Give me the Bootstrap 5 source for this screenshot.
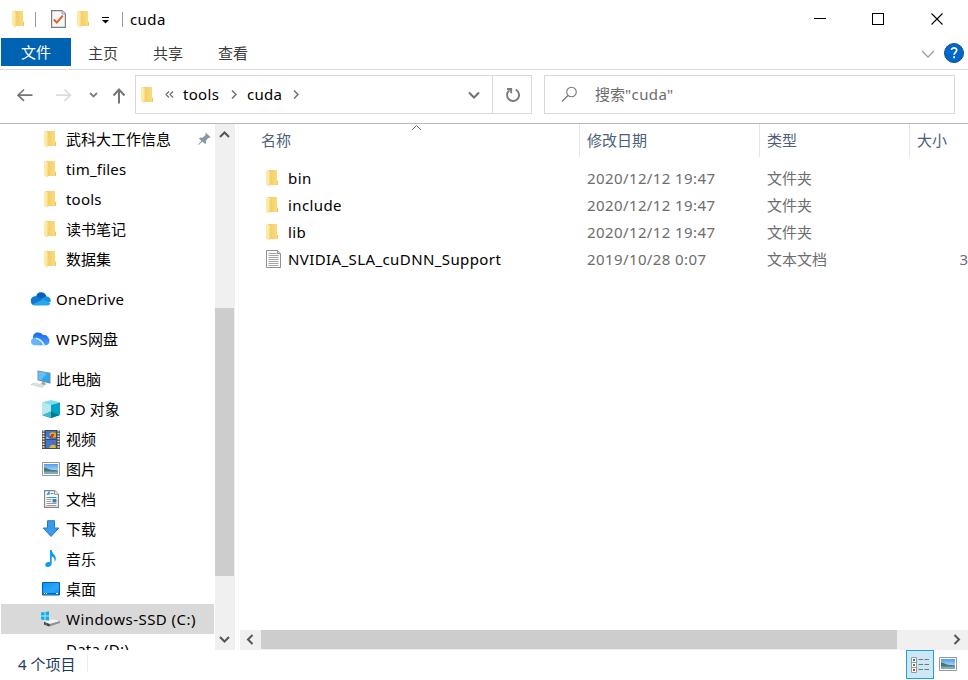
<!DOCTYPE html>
<html lang="zh-CN">
<head>
<meta charset="utf-8">
<meta name="viewport" content="width=device-width, initial-scale=1">
<title>cuda</title>
<link href="https://cdn.jsdelivr.net/npm/bootstrap@5.3.0/dist/css/bootstrap.min.css" rel="stylesheet">
<style>
body{font-family:"Noto Sans","Noto Sans CJK SC",sans-serif;font-size:15px;line-height:20px;color:#000;background:#fff}
svg{display:block;flex:none}
.win{width:968px;height:680px}
.titlebar{height:38px;padding-left:12px}
.sep{width:1px;height:15px;background:#9a9a9a}
.sep-a{margin:0 15px 0 10px}
.sep-b{margin:0 7px 0 13px}
.qat-folder{margin:0 12px 0 11px}
.tabs{height:32px;border-bottom:1px solid #dadbdc;padding-left:1px;color:#3b3b3b}
.file-tab{width:70px;height:28px;background:#0063b1;color:#fff}
.tab{width:65px;height:30px;padding-right:1px}
.ribbon-toggle{margin:8px 9px 0 0}
.help{margin:1px 4px 0 0}
.addr-row{height:54px;border-bottom:1px solid #b9b9b9;padding:5px 13px 0 0}
.addr{width:397px;height:39px;border:1px solid #d9d9d9}
.crumbs{padding-left:5px}
.crumb{height:22px;width:48px;margin-left:9px;white-space:nowrap;letter-spacing:.3px}
.crumb+svg+.crumb{width:46px;margin-left:10px}
.more{margin-left:11px}
.drop{margin-right:12px}
.refresh{width:39px;border-left:1px solid #d9d9d9;padding-left:1px}
.search{width:411px;height:39px;border:1px solid #d9d9d9;margin-left:12px;color:#6d6d6d}
.search svg{margin:0 17px 1px 16px}
.search-text{padding-bottom:2px}
.body-row{height:526px}
.side{width:215px;padding-left:1px}
.item{height:30px;flex:none;padding-left:40px}
.item.top{padding-left:29px;margin-top:10px}
.item .ico{width:20px;margin-right:5px}
.item .ico.fold{padding-left:3px}
.item.top .ico{width:21px}
.item.sel{background:#d9d9d9;width:213px}
.item .la{letter-spacing:.2px}
.item.sel .la{letter-spacing:.45px}
.pin{margin-left:27px}
.vbar{width:20px;background:#f0f0f0}
.thumb-v{width:19px;height:268px;background:#cdcdcd;margin-top:164px}
.arrow-v{height:20px}
.main-pane{width:730px;border-left:1px solid #f5f5f5;margin-left:3px}
.grid-head{height:33px;color:#4c607a;margin-bottom:8px}
.grid-head>div{padding-bottom:1px}
.c-name{width:340px;padding-left:22px;flex:none}
.c-date{width:180px;padding-left:8px;flex:none}
.c-type{width:150px;padding-left:8px;flex:none}
.c-size{width:60px;padding-left:8px;flex:none}
.grid-head .c-date,.grid-head .c-type,.grid-head .c-size{border-left:1px solid #e5e5e5;padding-left:7px}
.filerow{height:27px;color:#6d6d6d;padding-bottom:1px}
.filerow .c-name{color:#000;padding-left:27px}
.filerow .c-name svg{margin-right:7px;margin-bottom:1px}
.hbar{height:20px;background:#f0f0f0;margin-left:1px}
.thumb-h{width:636px;height:19px;background:#cdcdcd}
.sort{left:172px;top:0}
.status{height:30px;color:#1e395b;padding-left:18px}
.count{margin-top:4px}
.status-sep{width:1px;height:17px;background:#ececec;margin:5px 0 0 12px}
.view-on{width:28px;height:29px;background:#cce8f6;border:1px solid #26a0da}
.view-large{margin:7px 11px 0 5px}
.la{white-space:nowrap;letter-spacing:.4px}
</style>
<script src="https://cdn.jsdelivr.net/npm/bootstrap@5.3.0/dist/js/bootstrap.bundle.min.js"></script>
</head>
<body>
<svg width="0" height="0" class="position-absolute">
<defs>
<linearGradient id="gf" x1="0" x2="1"><stop offset="0" stop-color="#f0cc69"/><stop offset="1" stop-color="#fbdc7c"/></linearGradient>
<linearGradient id="gd" x1="0" y1="0" x2="1" y2="1"><stop offset="0" stop-color="#0a93f2"/><stop offset=".6" stop-color="#2aa7fa"/><stop offset="1" stop-color="#0c8eea"/></linearGradient>
<linearGradient id="gw" x1="0" x2="0" y1="0" y2="1"><stop offset="0" stop-color="#1467ef"/><stop offset="1" stop-color="#4ba4ff"/></linearGradient>
<linearGradient id="gs" x1="0" x2="0" y1="0" y2="1"><stop offset="0" stop-color="#4d9cf0"/><stop offset="1" stop-color="#e4f3fb"/></linearGradient>
</defs>
<symbol id="folder" viewBox="0 0 13 18"><path d="M2 1h9v10.500h1V16H3z" fill="url(#gf)"/><path d="M11 12h1v4h-1z" fill="#edc55f"/><path d="M0 1l4 1.500V16l-1.200 1.500L0 15.500z" fill="#fee9a6"/><path d="M3.200 4L4 2.500V16l-1.200 1.500z" fill="#fbdc85"/></symbol>
<symbol id="textdoc" viewBox="0 0 15 18"><path d="M.5.5h11l3 3v14H.5z" fill="#fbfbfb" stroke="#8f8f8f"/><path d="M11.500.5v3h3" fill="#ddd" stroke="#8f8f8f"/><path d="M2.500 3.500h8M2.500 5.500h10M2.500 7.500h10M2.500 9.500h10M2.500 11.500h10M2.500 13.500h10M2.500 15.500h10" stroke="#a4a4a4"/></symbol>
<symbol id="picture" viewBox="0 0 18 14"><path d="M.5.5h17v13H.5z" fill="#fff" stroke="#999"/><path d="M2 2h14v10H2z" fill="url(#gs)"/><path d="M2 5.500c3 0 4 1.800 7 2.200s5 .3 7 .8V10H2z" fill="#457a68"/><path d="M2 9.500h14V12H2z" fill="#7fa9c4"/></symbol>
</svg>

<div class="win d-flex flex-column overflow-hidden">
  <header class="titlebar d-flex align-items-center">
    <svg width="13" height="18"><use href="#folder"/></svg>
    <span class="sep sep-a"></span>
    <svg width="15" height="18" viewBox="0 0 15 18"><path d="M.6.6h10.500l3.300 3.200v13.600H.6z" fill="#f7f7f9" stroke="#7d7d7d" stroke-width="1.200"/><path d="M11 .6v3.300h3.400" fill="#e8e8e8" stroke="#999"/><path d="M2.800 9.500l3 3.200 6-7" fill="none" stroke="#e8591c" stroke-width="1.900"/></svg>
    <svg class="qat-folder" width="13" height="18"><use href="#folder"/></svg>
    <svg class="mt-1" width="7" height="8" viewBox="0 0 7 8"><path d="M0 .5h7" stroke="#000"/><path d="M0 3h7L3.500 6.500z"/></svg>
    <span class="sep sep-b"></span>
    <span class="la">cuda</span>
    <svg class="ms-auto" width="154" height="38" viewBox="0 0 154 38" fill="none" stroke="#000" shape-rendering="crispEdges"><path d="M0 18.500h12M58.500 13.500h11v11h-11z"/><path d="M117.500 13.500l11 11m0-11l-11 11" shape-rendering="auto" stroke-width="1.100"/></svg>
  </header>

  <nav class="tabs d-flex">
    <div class="file-tab d-flex align-items-center justify-content-center">文件</div>
    <div class="tab d-flex align-items-center justify-content-center">主页</div>
    <div class="tab d-flex align-items-center justify-content-center">共享</div>
    <div class="tab d-flex align-items-center justify-content-center">查看</div>
    <div class="ms-auto d-flex align-items-start pt-1">
      <svg class="ribbon-toggle" width="14" height="8" viewBox="0 0 14 8"><path d="M1 1l6 6 6-6" fill="none" stroke="#a0a0a0" stroke-width="1.300"/></svg>
      <svg class="help" width="20" height="20" viewBox="0 0 20 20"><circle cx="10" cy="10" r="9.500" fill="#0067cc" stroke="#174f88"/><path d="M7.500 7C7.500 4 12.900 4.200 12.700 7.300c0 2-2.600 2.200-2.600 4.500" fill="none" stroke="#fff" stroke-width="1.700"/><path d="M9.200 13.300H11v2H9.200z" fill="#fff"/></svg>
    </div>
  </nav>

  <section class="addr-row d-flex align-items-start">
    <svg width="135" height="39" viewBox="0 75 135 39" fill="none" stroke-width="2"><path d="M32.500 95.200H18M24 89.500l-6 5.700 6 5.700" stroke="#767676" stroke-width="1.700"/><path d="M56 95.200h14.500M64.500 89.500l6 5.700-6 5.700" stroke="#dcdcdc" stroke-width="1.700"/><path d="M90 93l3.500 3.500L97 93" stroke="#808080" stroke-width="1.800"/><path d="M119 103.500V90M113.500 95.500l5.500-6 5.500 6" stroke="#767676"/></svg>
    <div class="addr d-flex">
      <div class="crumbs d-flex align-items-center flex-grow-1">
        <svg width="13" height="18"><use href="#folder"/></svg>
        <svg class="more" width="9" height="7" viewBox="0 0 9 7"><path d="M4 .5l-3 3 3 3M8 .5l-3 3 3 3" fill="none" stroke="#6b6b6b" stroke-width="1.200"/></svg>
        <span class="crumb">tools</span>
        <svg width="6" height="9" viewBox="0 0 6 9"><path d="M1 .5l4 4-4 4" fill="none" stroke="#707070" stroke-width="1.500"/></svg>
        <span class="crumb">cuda</span>
        <svg width="6" height="9" viewBox="0 0 6 9"><path d="M1 .5l4 4-4 4" fill="none" stroke="#707070" stroke-width="1.500"/></svg>
        <svg class="drop ms-auto" width="12" height="8" viewBox="0 0 12 8"><path d="M1 1.500l5 5 5-5" fill="none" stroke="#707070" stroke-width="2"/></svg>
      </div>
      <div class="refresh d-flex align-items-center justify-content-center"><svg width="16" height="16" viewBox="0 0 16 16"><path d="M10.800 2.700A6 6 0 1 1 4.500 3.200M2 2h4.200v4.300" fill="none" stroke="#7b7b7b" stroke-width="1.900"/></svg></div>
    </div>
    <div class="search d-flex align-items-center">
      <svg width="17" height="17" viewBox="0 0 17 17"><circle cx="10.500" cy="6" r="4.800" fill="none" stroke="#757575" stroke-width="1.100"/><path d="M7 9.500L1 15.500" stroke="#757575" stroke-width="1.300"/></svg>
      <span class="search-text">搜索<span class="la">"cuda"</span></span>
    </div>
  </section>

  <div class="body-row d-flex">
    <aside class="side d-flex flex-column overflow-hidden">
      <div class="item d-flex align-items-center"><div class="ico fold"><svg width="13" height="18"><use href="#folder"/></svg></div>武科大工作信息
        <svg class="pin" width="13" height="14" viewBox="0 0 13 14"><path d="M7.500.5l5 4.500-1.500 1.200-.8-.2-2.300 2.800.3 2.200-1 1-3-2.600L.8 13l-.5-.5 3-3.700L1 6.500l1.200-1 2.200.2L7.500 3z" fill="#8a98a6"/></svg></div>
      <div class="item d-flex align-items-center"><div class="ico fold"><svg width="13" height="18"><use href="#folder"/></svg></div><span class="la">tim_files</span></div>
      <div class="item d-flex align-items-center"><div class="ico fold"><svg width="13" height="18"><use href="#folder"/></svg></div><span class="la">tools</span></div>
      <div class="item d-flex align-items-center"><div class="ico fold"><svg width="13" height="18"><use href="#folder"/></svg></div>读书笔记</div>
      <div class="item d-flex align-items-center"><div class="ico fold"><svg width="13" height="18"><use href="#folder"/></svg></div>数据集</div>
      <div class="item top d-flex align-items-center"><div class="ico"><svg width="21" height="14" viewBox="0 0 21 14"><path d="M6 5C7 1 9 .2 11 .3c3 0 5 2 5.500 4.500L12 8z" fill="#0364b8"/><path d="M1 10C0 6 3 4 6.500 4.300L14 8.500 3.500 13C2 12.800 1.200 11.500 1 10z" fill="#0f78d4"/><path d="M11 6.500l5-2c3 0 5 2 4.800 5L17 11z" fill="#1490df"/><path d="M2.200 12.500L13 7.500l7.500 3.500c-.5 1.800-2 2.500-3.500 2.500H5c-1.200 0-2-.4-2.800-1z" fill="#28a8ea"/></svg></div><span class="la">OneDrive</span></div>
      <div class="item top d-flex align-items-center"><div class="ico"><svg width="21" height="14" viewBox="0 0 21 14"><path d="M3 6C2.500 2 5.500.4 8 .4c2.500 0 4 1 5 2.700 3-.6 4.500.2 5 2.400 2.500 1.500 2 7.800-2.500 7.800H8z" fill="url(#gw)"/><path d="M7 5.500C2 5.500.8 8 1 10c.3 2.300 2 3.300 4 3.300h6L10 8z" fill="#65b4ff"/><path d="M6 6c3 0 6.500 1.500 9 7.300h-2C10.500 9 9 7.300 5.500 7z" fill="#d8edff"/></svg></div><span><span class="la">WPS</span>网盘</span></div>
      <div class="item top d-flex align-items-center"><div class="ico"><svg width="21" height="18" viewBox="0 0 21 18"><path d="M7.500.5l13 2.200v11l-13-3.500z" fill="#7c878e"/><path d="M8.300 1.500l11.500 2v9.100L8.300 9.500z" fill="#30a5f0"/><path d="M8.300 1.500l8.700 1.500-6 7.200-2.700-.7z" fill="#63bffb"/><path d="M12 11.600l3 .8v1.100l2 .5-3 1-4-1 2-.8z" fill="#9ba3a9"/><path d="M4 13l10.500 2.400L12 17.400 1 14.500z" fill="#dde2e5" stroke="#c3c9cd" stroke-width=".6"/></svg></div>此电脑</div>
      <div class="item d-flex align-items-center"><div class="ico"><svg width="20" height="18" viewBox="0 0 20 18"><path d="M1 2.500L10 0l9 2.500L10 6z" fill="#7cdfe9"/><path d="M1 2.500L10 5v13l-9-3z" fill="#b6e9eb"/><path d="M19 2.500L10 5v13l9-3z" fill="#00a3c4"/><path d="M10 11.500l8.500 3.700L10 18l-8.500-2.700z" fill="#08798a"/><path d="M10 11.500V18l-8.500-2.700z" fill="#40bdc8"/></svg></div><span><span class="la">3D</span> 对象</span></div>
      <div class="item d-flex align-items-center"><div class="ico"><svg width="19" height="19" viewBox="0 0 19 19"><path d="M1 0h18v19H1z" fill="#4a4a4a"/><path d="M2.500 0v19M17.500 0v19" stroke="#e7e7e7" stroke-width="2" stroke-dasharray="1.500 1.200"/><path d="M5 1h10v8H5zM5 10h10v8H5z" fill="#3c78d8"/><path d="M8 4l3-2 4 1v4l-4 1z" fill="#d4b226"/><path d="M10 4h3v2h-3zM9 6h3v2H9z" fill="#cf3b26"/><path d="M8 18l2-3h4l1 3z" fill="#e5ba26"/><path d="M10 12l3-1-1 3z" fill="#d44030"/><path d="M5 6l4 3H5z" fill="#80b5ef"/></svg></div>视频</div>
      <div class="item d-flex align-items-center"><div class="ico"><svg width="19" height="14" viewBox="-1 0 19 14"><use href="#picture" width="18" height="14"/></svg></div>图片</div>
      <div class="item d-flex align-items-center"><div class="ico"><svg width="18" height="18" viewBox="-3 0 18 18"><path d="M.6.600h10l3.800 3.800v13H.6z" fill="#fff" stroke="#858585" stroke-width="1.200"/><path d="M10.500.6v3.800h4" fill="#eee" stroke="#999"/><path d="M3 5l2-3v3M6.500 3.500h3M2.500 7.500h10" fill="none" stroke="#2397d7" stroke-width="1.200"/><path d="M2.500 9.500h5m-5 2h5m-5 2h10m-10 2h10" stroke="#999"/><path d="M8.500 9h4v3.500h-4z" fill="#347fbd"/></svg></div>文档</div>
      <div class="item d-flex align-items-center"><div class="ico"><svg width="19" height="18" viewBox="0 0 19 18"><path d="M6.500.7h7V8h4.300L10 16.500 2.200 8h4.300z" fill="#399bea" stroke="#257bc3"/></svg></div>下载</div>
      <div class="item d-flex align-items-center"><div class="ico"><svg width="19" height="18" viewBox="0 0 19 18"><path d="M9 0h1.700c0 4 5 4.500 4 10l-1 2c.3-3.200-1-5-3-5.500v7c0 4-6 4.500-6.500 1.800C4 12.500 6.500 11.500 9 12z" fill="#0d99f2"/></svg></div>音乐</div>
      <div class="item d-flex align-items-center"><div class="ico"><svg width="19" height="14" viewBox="0 0 19 14"><path d="M1.500.5h17v12.500h-17z" fill="url(#gd)" stroke="#0066a9"/><path d="M2 11.500h16" stroke="#07639f"/><path d="M3 11.500h1m1 0h1m9 0h2" stroke="#fff"/></svg></div>桌面</div>
      <div class="item sel d-flex align-items-center"><div class="ico"><svg width="20" height="16" viewBox="0 0 20 16"><path d="M3 11l9-2.500 7 1.500v2L8.500 15.500 3 13.500z" fill="#8d9194"/><path d="M3 11l9-3 7 2-10.500 3z" fill="#f1f2f2"/><path d="M3 11l5.500 2v2.500L3 13.500z" fill="#353b3e"/><path d="M4.500 12.800l1.500.5" stroke="#5fd35f"/><path d="M0 1.500L3.500 1v3.500H0zM4.500.9L8 .3v4.200H4.500zM0 5.500h3.500V9L0 8.500zM4.500 5.500H8v4l-3.500-.5z" fill="#00b4f0"/></svg></div><span class="la">Windows-SSD (C:)</span></div>
      <div class="item d-flex align-items-center"><div class="ico"><svg width="20" height="6" viewBox="0 0 20 6"><path d="M7 6l4.500-2L16 6z" fill="#dedede"/></svg></div><span class="la">Data (D:)</span></div>
    </aside>
    <div class="vbar d-flex flex-column">
      <svg class="arrow-v" width="20" viewBox="0 0 20 20"><path d="M5 13l4.500-4.500L14 13" fill="none" stroke="#555" stroke-width="2"/></svg>
      <div class="thumb-v"></div>
      <svg class="arrow-v mt-auto" width="20" viewBox="0 0 20 20"><path d="M5 7l4.500 4.500L14 7" fill="none" stroke="#555" stroke-width="2"/></svg>
    </div>
    <div class="main-pane d-flex flex-column overflow-hidden">
      <div class="grid-head d-flex position-relative">
        <svg class="sort position-absolute" width="11" height="7" viewBox="0 0 11 7"><path d="M1 6l4.500-4.500L10 6" fill="none" stroke="#666"/></svg>
        <div class="c-name d-flex align-items-center">名称</div>
        <div class="c-date d-flex align-items-center">修改日期</div>
        <div class="c-type d-flex align-items-center">类型</div>
        <div class="c-size d-flex align-items-center">大小</div>
      </div>
      <div class="filerow d-flex align-items-center"><div class="c-name d-flex align-items-center"><svg width="15" height="18" viewBox="0 0 15 18"><use href="#folder" width="13" height="18"/></svg><span class="la">bin</span></div><div class="c-date la">2020/12/12 19:47</div><div class="c-type">文件夹</div></div>
      <div class="filerow d-flex align-items-center"><div class="c-name d-flex align-items-center"><svg width="15" height="18" viewBox="0 0 15 18"><use href="#folder" width="13" height="18"/></svg><span class="la">include</span></div><div class="c-date la">2020/12/12 19:47</div><div class="c-type">文件夹</div></div>
      <div class="filerow d-flex align-items-center"><div class="c-name d-flex align-items-center"><svg width="15" height="18" viewBox="0 0 15 18"><use href="#folder" width="13" height="18"/></svg><span class="la">lib</span></div><div class="c-date la">2020/12/12 19:47</div><div class="c-type">文件夹</div></div>
      <div class="filerow d-flex align-items-center"><div class="c-name d-flex align-items-center"><svg width="15" height="18"><use href="#textdoc"/></svg><span class="la">NVIDIA_SLA_cuDNN_Support</span></div><div class="c-date la">2019/10/28 0:07</div><div class="c-type">文本文档</div><div class="ms-auto">3</div></div>
      <div class="hbar mt-auto d-flex">
        <svg width="21" height="20" viewBox="0 0 21 20"><path d="M12.500 5L8 9.500l4.500 4.500" fill="none" stroke="#555" stroke-width="2"/></svg>
        <div class="thumb-h"></div>
        <svg class="ms-auto" width="21" height="20" viewBox="0 0 21 20"><path d="M7.500 5L12 9.500 7.500 14" fill="none" stroke="#555" stroke-width="2"/></svg>
      </div>
    </div>
  </div>

  <footer class="status d-flex align-items-start">
    <span class="count">4 个项目</span>
    <span class="status-sep"></span>
    <div class="view-on ms-auto d-flex align-items-center justify-content-center">
      <svg width="19" height="16" viewBox="0 0 19 16"><path d="M.5.5h5v15h-5zM.5 5.500h5m-5 5h5" fill="#fff" stroke="#999"/><path d="M2 2h2v2H2z" fill="#2a7fb5"/><path d="M2 7h2v2H2z" fill="#5b7a55"/><path d="M2 12h2v2H2z" fill="#d03a2a"/><path d="M7.500 2.500H12m1.500 0H18M7.500 7.500H12m1.500 0H18m-10.500 5H12m1.500 0H18" stroke="#777"/></svg>
    </div>
    <svg class="view-large" width="18" height="14"><use href="#picture"/></svg>
  </footer>
</div>
</body>
</html>
